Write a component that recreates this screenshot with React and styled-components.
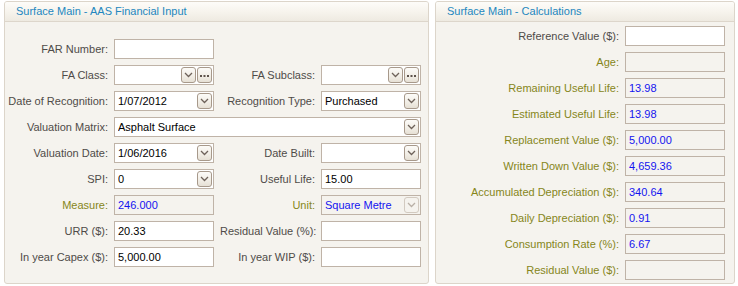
import React from 'react'
import styled, { createGlobalStyle } from 'styled-components'

const GlobalStyle = createGlobalStyle`
    html, body {
        margin: 0;
        padding: 0;
        background: #ffffff;
    }
    body {
        font-family: "Liberation Sans", Arial, sans-serif;
        font-size: 11px;
    }
`

const Page = styled.div`
    display: flex;
    align-items: flex-start;
    gap: 6px;
    padding: 1px 0 0 4px;
`

const Panel = styled.section`
    box-sizing: border-box;
    width: ${p => p.$width}px;
    height: 283px;
    background: #f5f3ee;
    border: 1px solid #dcd5ca;
    border-radius: 3px;
    overflow: hidden;
`

const PanelHeader = styled.div`
    height: 19px;
    line-height: 19px;
    padding-left: 11px;
    background: linear-gradient(to bottom, #fdfcf9 0%, #f6f3ec 55%, #eeeae1 100%);
    border-bottom: 1px solid #ddd6cb;
    color: #2387bf;
    font-size: 11px;
`

const FormGrid = styled.div`
    display: grid;
    grid-template-columns: ${p => p.$columns};
    grid-auto-rows: 20px;
    column-gap: 6px;
    row-gap: 6px;
    align-items: center;
    padding: ${p => p.$padding};
`

const Label = styled.div`
    text-align: right;
    white-space: nowrap;
    color: ${p => (p.$calc ? '#86861a' : '#4f4b48')};
`

const Field = styled.div`
    box-sizing: border-box;
    display: flex;
    align-items: center;
    gap: 1px;
    height: 20px;
    padding: 0 1px 0 3px;
    grid-column: ${p => p.$span || 'auto'};
    background: ${p => (p.$readOnly ? '#f5f3ee' : '#ffffff')};
    border: 1px solid #bfb3a7;
    color: ${p => (p.$readOnly ? '#1414f0' : '#000000')};
    white-space: nowrap;
`

const Value = styled.span`
    flex: 1;
    overflow: hidden;
`

const SmallButton = styled.div`
    box-sizing: border-box;
    display: flex;
    align-items: center;
    justify-content: center;
    width: 15px;
    height: 16px;
    border: 1px solid ${p => (p.$disabled ? '#d2cac0' : '#a7998b')};
    border-radius: 3px;
    background: ${p =>
        p.$disabled
            ? '#f5f3ee'
            : 'linear-gradient(to bottom, #fcfbf8 0%, #f1ede5 60%, #e6e0d5 100%)'};
`

const Chevron = ({ disabled }) => (
    <svg width="9" height="6" viewBox="0 0 9 6">
        <polyline
            points="1,1 4.5,4.5 8,1"
            fill="none"
            stroke={disabled ? '#b9b0a6' : '#6e625a'}
            strokeWidth="1.3"
        />
    </svg>
)

const Dots = () => (
    <svg width="9" height="3" viewBox="0 0 9 3">
        <rect x="0" y="1" width="2" height="2" fill="#5e534c" />
        <rect x="3.5" y="1" width="2" height="2" fill="#5e534c" />
        <rect x="7" y="1" width="2" height="2" fill="#5e534c" />
    </svg>
)

const Blank = styled.div``

const Text = ({ value, readOnly, span }) => (
    <Field $readOnly={readOnly} $span={span}>
        <Value>{value}</Value>
    </Field>
)

const Select = ({ value, readOnly, span, lookup }) => (
    <Field $readOnly={readOnly} $span={span}>
        <Value>{value}</Value>
        <SmallButton $disabled={readOnly}>
            <Chevron disabled={readOnly} />
        </SmallButton>
        {lookup && (
            <SmallButton>
                <Dots />
            </SmallButton>
        )}
    </Field>
)

const calculations = [
    ['Age:', ''],
    ['Remaining Useful Life:', '13.98'],
    ['Estimated Useful Life:', '13.98'],
    ['Replacement Value ($):', '5,000.00'],
    ['Written Down Value ($):', '4,659.36'],
    ['Accumulated Depreciation ($):', '340.64'],
    ['Daily Depreciation ($):', '0.91'],
    ['Consumption Rate (%):', '6.67'],
    ['Residual Value ($):', ''],
]

export default () => (
    <>
        <GlobalStyle />
        <Page>
            <Panel $width={425}>
                <PanelHeader>Surface Main - AAS Financial Input</PanelHeader>
                <FormGrid $columns="103px 100px 95px 100px" $padding="17px 0 0 0">
                    <Label>FAR Number:</Label>
                    <Text />
                    <Blank />
                    <Blank />

                    <Label>FA Class:</Label>
                    <Select lookup />
                    <Label>FA Subclass:</Label>
                    <Select lookup />

                    <Label>Date of Recognition:</Label>
                    <Select value="1/07/2012" />
                    <Label>Recognition Type:</Label>
                    <Select value="Purchased" />

                    <Label>Valuation Matrix:</Label>
                    <Select value="Asphalt Surface" span="2 / 5" />

                    <Label>Valuation Date:</Label>
                    <Select value="1/06/2016" />
                    <Label>Date Built:</Label>
                    <Select />

                    <Label>SPI:</Label>
                    <Select value="0" />
                    <Label>Useful Life:</Label>
                    <Text value="15.00" />

                    <Label $calc>Measure:</Label>
                    <Text value="246.000" readOnly />
                    <Label $calc>Unit:</Label>
                    <Select value="Square Metre" readOnly />

                    <Label>URR ($):</Label>
                    <Text value="20.33" />
                    <Label>Residual Value (%):</Label>
                    <Text />

                    <Label>In year Capex ($):</Label>
                    <Text value="5,000.00" />
                    <Label>In year WIP ($):</Label>
                    <Text />
                </FormGrid>
            </Panel>

            <Panel $width={300}>
                <PanelHeader>Surface Main - Calculations</PanelHeader>
                <FormGrid $columns="183px 100px" $padding="4px 0 0 0">
                    <Label>Reference Value ($):</Label>
                    <Text />
                    {calculations.map(([label, value]) => (
                        <React.Fragment key={label}>
                            <Label $calc>{label}</Label>
                            <Text value={value} readOnly />
                        </React.Fragment>
                    ))}
                </FormGrid>
            </Panel>
        </Page>
    </>
)
